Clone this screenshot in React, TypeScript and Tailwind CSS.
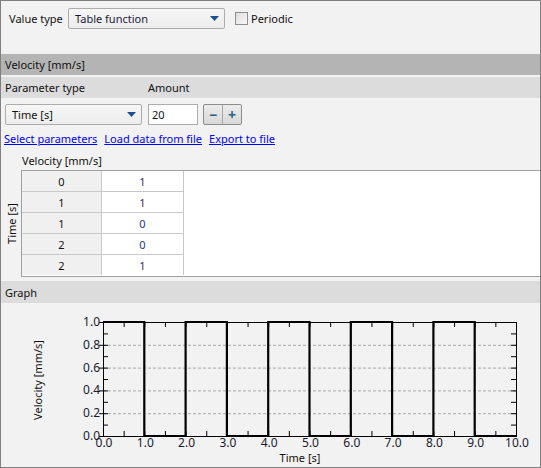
import React from "react"

const rows: [string, string][] = [
    ["0", "1"],
    ["1", "1"],
    ["1", "0"],
    ["2", "0"],
    ["2", "1"],
]

// plot box inside the graph svg (svg origin = page x 1, y 303)
const L = 102
const R = 515
const T = 19
const B = 133
const sx = (v: number) => L + ((R - L) * v) / 10
const sy = (v: number) => B - (B - T) * v

function Graph() {
    const wave: string[] = []
    for (let i = 0; i < 10; i++) {
        const hi = i % 2 === 0
        const y = sy(hi ? 1 : 0)
        wave.push(`${i === 0 ? "M" : "L"}${sx(i)},${y}`, `L${sx(i + 1)},${y}`)
    }
    const xTicks = Array.from({ length: 21 }, (_, i) => i * 0.5)
    const yTicks = Array.from({ length: 11 }, (_, i) => i / 10)

    return (
        <svg width={539} height={164} className="block" style={{ fontFamily: '"Noto Sans", "Open Sans", sans-serif' }}>
            {[0.2, 0.4, 0.6, 0.8].map((v) => (
                <line key={v} x1={L} x2={R} y1={sy(v) + 0.5} y2={sy(v) + 0.5} stroke="#a8a8a8" strokeDasharray="3 2" />
            ))}
            {xTicks.map((v) => (
                <g key={v} stroke="#000">
                    <line x1={sx(v) + 0.5} x2={sx(v) + 0.5} y1={B} y2={B - 5} />
                    <line x1={sx(v) + 0.5} x2={sx(v) + 0.5} y1={T} y2={T + 5} />
                </g>
            ))}
            {yTicks.map((v, i) => (
                <g key={v} stroke="#000">
                    <line x1={i % 2 === 0 ? L - 4 : L} x2={L + 5} y1={sy(v) + 0.5} y2={sy(v) + 0.5} />
                    <line x1={R - 5} x2={R} y1={sy(v) + 0.5} y2={sy(v) + 0.5} />
                </g>
            ))}
            <rect x={L + 0.5} y={T + 0.5} width={R - L} height={B - T} fill="none" stroke="#000" />
            <path d={wave.join(" ")} fill="none" stroke="#000" strokeWidth={2.2} />
            {[0, 0.2, 0.4, 0.6, 0.8, 1].map((v) => (
                <text key={v} x={L - 3} y={sy(v) + 4} fontSize={12} textAnchor="end" fill="#1a1a2e">
                    {v.toFixed(1)}
                </text>
            ))}
            {Array.from({ length: 11 }, (_, i) => (
                <text key={i} x={sx(i) + 1} y={144} fontSize={12} textAnchor="middle" fill="#1a1a2e">
                    {i.toFixed(1)}
                </text>
            ))}
            <text x={299} y={159} fontSize={11} textAnchor="middle" fill="#111">
                Time [s]
            </text>
            <text x={0} y={0} fontSize={11} textAnchor="middle" fill="#111" transform="translate(41 77) rotate(-90)">
                Velocity [mm/s]
            </text>
        </svg>
    )
}

function Arrow() {
    return (
        <svg width="9" height="5" viewBox="0 0 9 5">
            <path d="M0 0H9L4.5 5Z" fill="#1f4f8f" />
        </svg>
    )
}

export default function App() {
    return (
        <div
            className="w-[541px] h-[468px] border border-[#808080] bg-[#f2f2f2] flex flex-col text-[11px] leading-none text-[#111]"
            style={{ fontFamily: '"Noto Sans", "Open Sans", sans-serif' }}
        >
            {/* value type row */}
            <div className="h-[53px] flex items-start pt-[7px] pl-[8px]">
                <div className="w-[59px] h-[21px] flex items-center">Value type</div>
                <div className="w-[157px] h-[21px] flex items-center justify-between pl-[6px] pr-[5px] border border-[#acacac] rounded-[2px] bg-gradient-to-b from-[#f7f7f7] to-[#ececec] text-[#1a1a3a]">
                    <span>Table function</span>
                    <Arrow />
                </div>
                <div className="ml-[10px] h-[21px] flex items-center gap-[3px]">
                    <div className="w-[13px] h-[13px] border border-[#8e8e8e] bg-gradient-to-br from-[#dedede] to-[#f8f8f8]" />
                    <span>Periodic</span>
                </div>
            </div>

            <div className="h-[21px] bg-[#b4b4b4] flex items-center pl-[4px]">Velocity [mm/s]</div>
            <div className="mt-[2px] h-[21px] bg-[#dcdcdc] flex items-center pl-[4px]">
                <span className="w-[143px]">Parameter type</span>
                <span>Amount</span>
            </div>

            {/* controls */}
            <div className="mt-[6px] h-[21px] flex pl-[4px]">
                <div className="w-[137px] h-[21px] flex items-center justify-between pl-[6px] pr-[5px] border border-[#acacac] rounded-[2px] bg-gradient-to-b from-[#f7f7f7] to-[#ececec]">
                    <span>Time [s]</span>
                    <Arrow />
                </div>
                <div className="ml-[6px] w-[50px] h-[21px] border border-[#acacac] bg-white flex items-center pl-[3px]">20</div>
                <div className="ml-[5px] flex h-[21px] border border-[#8c8c8c] rounded-[2px] bg-gradient-to-b from-[#ececec] to-[#d8d8d8]">
                    <div className="w-[18px] flex items-center justify-center text-[#2f5f7f] font-bold text-[14px]">−</div>
                    <div className="w-[1px] bg-[#a8a8a8]" />
                    <div className="w-[18px] flex items-center justify-center text-[#2f5f7f] font-bold text-[14px]">+</div>
                </div>
            </div>

            <div className="mt-[5px] h-[16px] flex items-center gap-[7px] pl-[3px] text-[#0000ff]">
                <span className="underline">Select parameters</span>
                <span className="underline">Load data from file</span>
                <span className="underline">Export to file</span>
            </div>

            <div className="mt-[6px] h-[16px] flex items-center pl-[21px]">Velocity [mm/s]</div>

            {/* table */}
            <div className="mt-[2px] flex h-[107px]">
                <div className="w-[20px] flex items-center justify-center">
                    <span className="-rotate-90 whitespace-nowrap">Time [s]</span>
                </div>
                <div className="flex-1 flex border-y border-l border-[#a0a0a0] bg-white">
                    <div className="flex flex-col">
                        {rows.map(([t, v], i) => (
                            <div key={i} className={`flex ${i < 4 ? "h-[21px] border-b" : "h-[20px]"} border-[#c8c8c8]`}>
                                <div className="w-[80px] bg-[#f0f0f0] border-r border-[#c8c8c8] flex items-center justify-center">{t}</div>
                                <div
                                    className={`w-[82px] border-r border-[#c8c8c8] flex items-center justify-center ${v === "1" ? "text-[#4a1a66]" : "text-[#1a3a8a]"}`}
                                >
                                    {v}
                                </div>
                            </div>
                        ))}
                    </div>
                    <div className="flex-1" />
                </div>
            </div>

            <div className="mt-[4px] h-[22px] bg-[#dcdcdc] flex items-center pl-[4px]">Graph</div>
            <div className="flex-1">
                <Graph />
            </div>
        </div>
    )
}
